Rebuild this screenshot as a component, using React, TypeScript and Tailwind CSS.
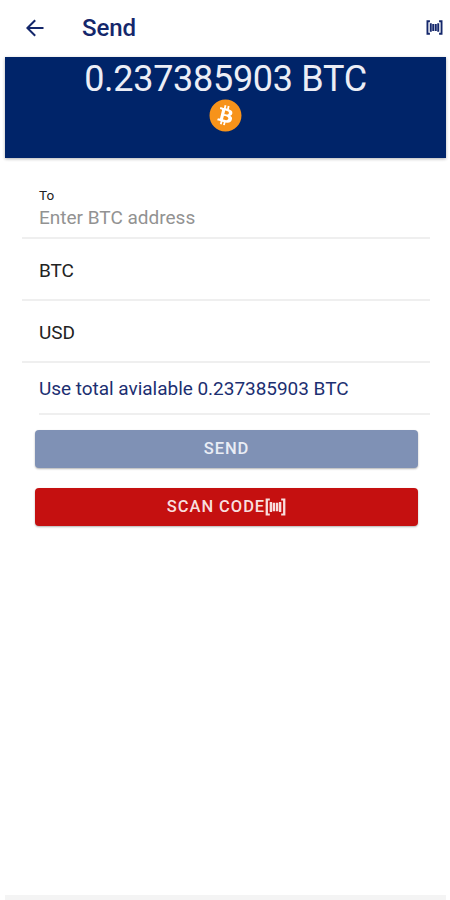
import React from "react";
import { FaBitcoin } from "react-icons/fa";

const BALANCE = "0.237385903";

interface IconProps {
  className?: string;
}

const BackIcon: React.FC<IconProps> = ({ className }) => (
  <svg viewBox="0 0 18 18" className={className} fill="none" aria-hidden="true">
    <path
      d="M17.5 9H1.8M9.2 1.2L1.4 9l7.8 7.8"
      stroke="currentColor"
      strokeWidth="2"
    />
  </svg>
);

const BarcodeIcon: React.FC<IconProps> = ({ className }) => (
  <svg
    viewBox="0 0 20 18"
    preserveAspectRatio="none"
    className={className}
    fill="none"
    stroke="currentColor"
    aria-hidden="true"
  >
    <path d="M4.6 1.5H1.7v15h2.9M15.4 1.5h2.9v15h-2.9" strokeWidth="2.2" />
    <path d="M5.6 4v10M8.5 4.8v8.4M11.5 4.8v8.4M14.4 4v10" strokeWidth="2.3" />
  </svg>
);

interface AmountFieldProps {
  label: string;
}

const AmountField: React.FC<AmountFieldProps> = ({ label }) => (
  <div className="flex h-[62px] items-center border-b-2 border-[#efefef] pt-[5px] pl-[17px] text-[19px] tracking-[-0.1px] text-[#222]">
    {label}
  </div>
);

export default function App() {
  return (
    <div className="flex h-[900px] w-[450px] flex-col overflow-hidden bg-white pr-1 pl-[5px] font-['Roboto',sans-serif]">
      <header className="flex h-[57px] shrink-0 items-center pr-[3px] pb-[2px] pl-[21px] text-[#14276b]">
        <BackIcon className="h-[18px] w-[18px]" />
        <h1 className="ml-[38px] text-2xl leading-[30px] font-medium tracking-[-0.1px]">
          Send
        </h1>
        <BarcodeIcon className="ml-auto h-[15px] w-[17px]" />
      </header>

      <section className="flex h-[101px] shrink-0 flex-col items-center bg-[#002469] shadow-[0_1px_3px_rgba(0,0,0,0.3)]">
        <p className="mt-[2px] text-[36px] leading-[40px] tracking-[-0.3px] whitespace-nowrap text-[#eceef6]">
          {BALANCE} BTC
        </p>
        <div className="h-[33px] w-[33px] rounded-full bg-[radial-gradient(circle,white_55%,transparent_56%)]">
          <FaBitcoin className="h-[33px] w-[33px] text-[#f7931a]" />
        </div>
      </section>

      <main className="flex flex-col pt-[25px] pr-4 pl-[17px]">
        <div className="h-[56px] border-b-2 border-[#efefef] pl-[17px]">
          <div className="pt-[5px] text-[13.5px] leading-[15px] text-[#222]">
            To
          </div>
          <div className="text-[19px] leading-[29px] text-[#929292]">
            Enter BTC address
          </div>
        </div>
        <AmountField label="BTC" />
        <AmountField label="USD" />
        <div className="ml-[17px] flex h-[52px] items-center border-b-2 border-[#efefef] pt-[3px] text-[19px] tracking-[-0.03px] text-[#1c2f71]">
          Use total avialable {BALANCE} BTC
        </div>

        <div className="mt-[15px] mr-[12px] ml-[13px] flex flex-col gap-5">
          <button
            type="button"
            className="flex h-[38px] items-center justify-center rounded bg-[#7f91b5] text-[16.5px] font-medium tracking-[0.9px] text-[#e9edf5] shadow-[0_1px_2px_rgba(0,0,0,0.3)]"
          >
            SEND
          </button>
          <button
            type="button"
            className="flex h-[38px] items-center justify-center rounded bg-[#c51010] text-[16.5px] font-medium tracking-[0.95px] text-[#f8dede] shadow-[0_1px_2px_rgba(0,0,0,0.3)]"
          >
            SCAN CODE
            <BarcodeIcon className="h-[18px] w-[21px]" />
          </button>
        </div>
      </main>

      <footer className="mt-auto h-[5px] shrink-0 bg-[#f4f4f4]" />
    </div>
  );
}
